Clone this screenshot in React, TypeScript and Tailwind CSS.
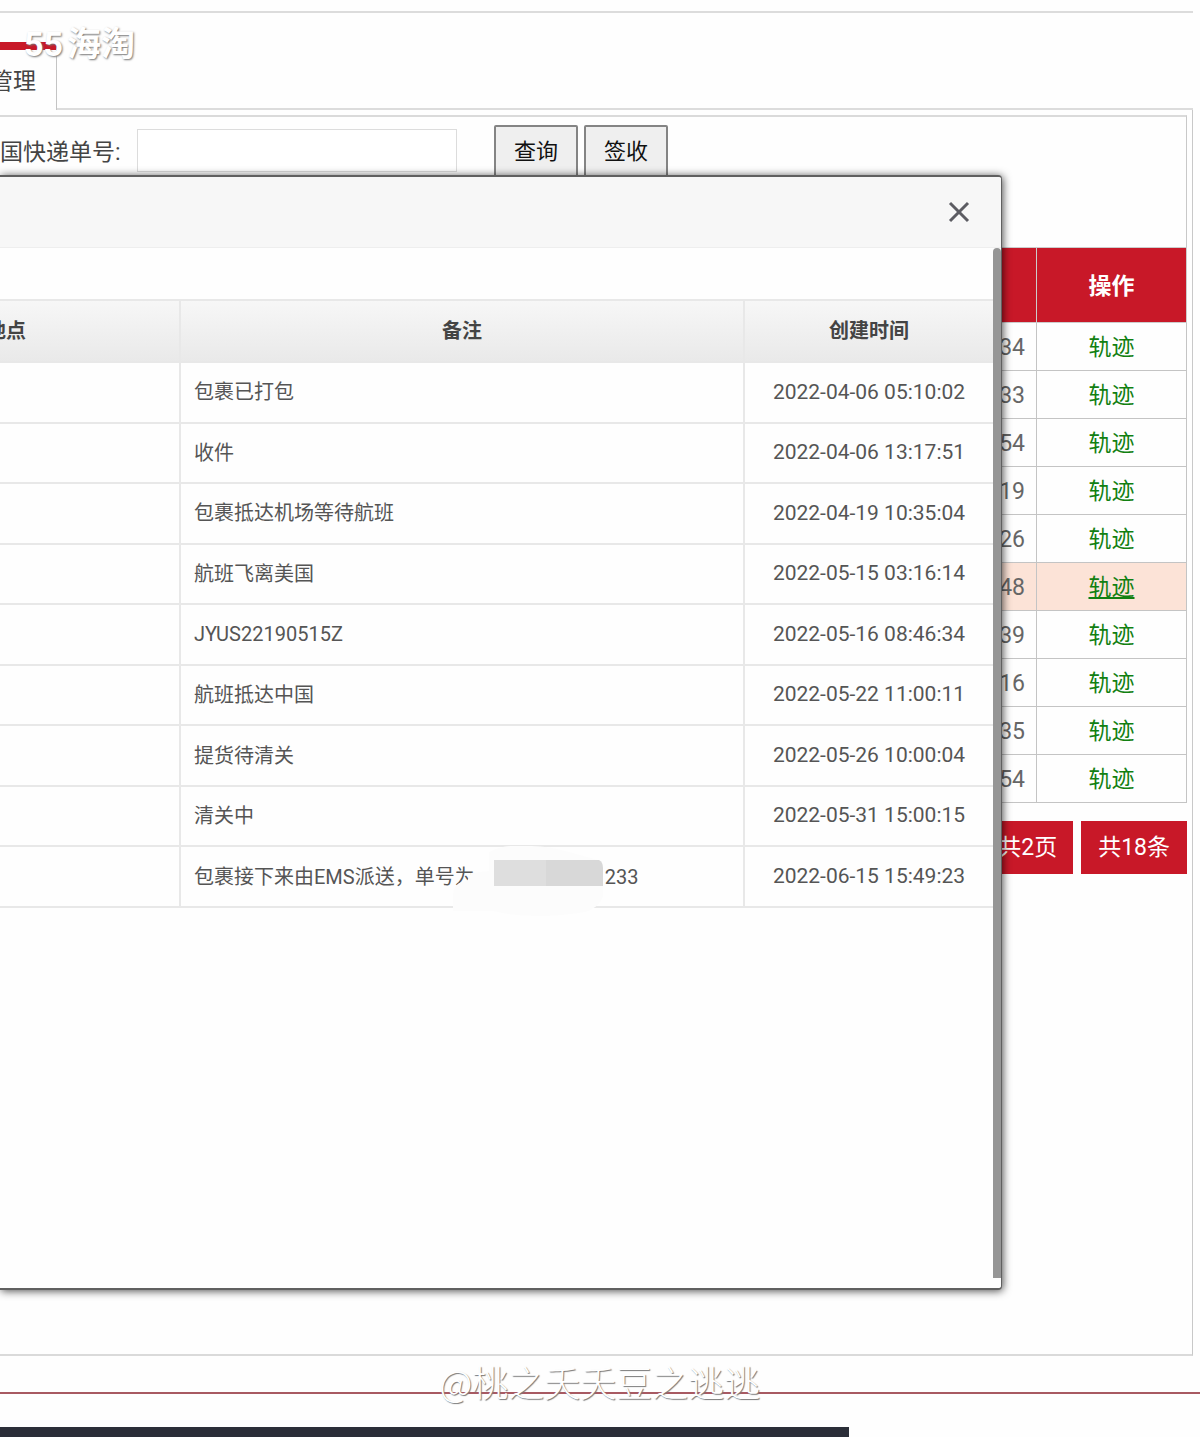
import { X } from "lucide-react";

type Track = {
  remark: string;
  createdAt: string;
  masked?: string;
};

type Parcel = {
  seconds: string;
  active?: boolean;
};

const TRACKS: Track[] = [
  { remark: "包裹已打包", createdAt: "2022-04-06 05:10:02" },
  { remark: "收件", createdAt: "2022-04-06 13:17:51" },
  { remark: "包裹抵达机场等待航班", createdAt: "2022-04-19 10:35:04" },
  { remark: "航班飞离美国", createdAt: "2022-05-15 03:16:14" },
  { remark: "JYUS22190515Z", createdAt: "2022-05-16 08:46:34" },
  { remark: "航班抵达中国", createdAt: "2022-05-22 11:00:11" },
  { remark: "提货待清关", createdAt: "2022-05-26 10:00:04" },
  { remark: "清关中", createdAt: "2022-05-31 15:00:15" },
  {
    remark: "包裹接下来由EMS派送，单号为",
    createdAt: "2022-06-15 15:49:23",
    masked: "233",
  },
];

const PARCELS: Parcel[] = [
  { seconds: "34" },
  { seconds: "33" },
  { seconds: "54" },
  { seconds: "19" },
  { seconds: "26" },
  { seconds: "48", active: true },
  { seconds: "39" },
  { seconds: "16" },
  { seconds: "35" },
  { seconds: "54" },
];

function TabBar() {
  return (
    <nav className="mt-[29px] mr-[7px] flex h-[68px]">
      <a
        href="#parcels"
        className="flex w-[57px] shrink-0 justify-end overflow-hidden border-t-8 border-r border-t-[#c81828] border-r-[#c4c4c4] pt-4 pr-5 text-[23px] leading-8 whitespace-nowrap text-[#444]"
      >
        管理
      </a>
      <div className="flex-1 border-b-2 border-[#dcdcdc]" />
    </nav>
  );
}

function SearchBar() {
  return (
    <form className="flex h-[132px] items-start border-t-2 border-r border-t-[#dadada] border-r-[#c8c8c8] pt-2">
      <label
        htmlFor="express-no"
        className="w-[137px] shrink-0 pt-3 text-[23px] leading-8 text-[#444]"
      >
        国快递单号:
      </label>
      <input
        id="express-no"
        type="text"
        className="mt-1 h-[43px] w-80 border border-[#dcdcdc] bg-white px-2 text-[22px]"
      />
      <div className="ml-[37px] flex gap-[6px]">
        <button
          type="button"
          className="h-[53px] w-[84px] rounded-xs border-2 border-[#848484] bg-[#efefef] text-[22px] text-[#111]"
        >
          查询
        </button>
        <button
          type="button"
          className="h-[53px] w-[84px] rounded-xs border-2 border-[#848484] bg-[#efefef] text-[22px] text-[#111]"
        >
          签收
        </button>
      </div>
    </form>
  );
}

function ParcelTable() {
  return (
    <table className="w-full table-fixed border-collapse text-[23px] leading-8">
      <thead>
        <tr className="h-[75px] bg-[#c81828] text-white">
          <th className="border border-[#ccc]" />
          <th className="w-[150px] border border-[#ccc] pt-[3px] font-bold">操作</th>
        </tr>
      </thead>
      <tbody>
        {PARCELS.map((parcel, index) => (
          <tr
            key={index}
            className={parcel.active ? "h-12 bg-[#fce3d7]" : "h-12"}
          >
            <td className="border border-[#c4c4c4] pt-[3px] pr-[11px] text-right text-[#666]">
              {parcel.seconds}
            </td>
            <td className="border border-[#c4c4c4] pt-[3px] text-center">
              <a
                href="#track"
                className={
                  parcel.active
                    ? "text-[#118011] underline underline-offset-2"
                    : "text-[#118011]"
                }
              >
                轨迹
              </a>
            </td>
          </tr>
        ))}
      </tbody>
    </table>
  );
}

function Pager() {
  return (
    <div className="mt-[18px] flex justify-end gap-2 text-[23px] text-white">
      <span className="flex h-[53px] items-center bg-[#c81828] px-4 pt-[2px]">共2页</span>
      <span className="flex h-[53px] items-center bg-[#c81828] px-[17px] pt-[2px]">共18条</span>
    </div>
  );
}

// Blurred-out part of the tracking number
function Mask() {
  return (
    <svg
      className="absolute -top-[17px] -left-[26px] h-[70px] w-[156px]"
      viewBox="0 0 156 70"
      aria-hidden="true"
    >
      <path
        d="M40 6Q52 0 62 0h20q18 0 38 6l29 8q5 8 5 30v6q-4 12-18 16-24 4-46 4-26 0-46-5H4V50q0-14 14-15l4-8 18-2Z"
        fill="#fcfcfc"
      />
      <path d="M45 14h52v26H45Z" fill="#dedede" />
      <path d="M97 14h53q4 2 4 8v18H97Z" fill="#d8d8d8" />
    </svg>
  );
}

function TrackDialog() {
  return (
    <section
      role="dialog"
      aria-label="轨迹"
      className="absolute top-[175px] right-[198px] left-0 flex h-[1115px] flex-col overflow-hidden rounded-r border-y-2 border-r border-[#606060] bg-[#fefefe] shadow-[1px_1px_8px_rgba(0,0,0,0.7)]"
    >
      <header className="flex h-[71px] shrink-0 items-center justify-end border-b border-[#eee] bg-[#f7f7f7] pr-6">
        <button type="button" aria-label="关闭" className="text-[#5c5c62]">
          <X size={36} strokeWidth={2} strokeLinecap="butt" />
        </button>
      </header>
      <div className="flex flex-1 justify-end">
        <div className="flex min-w-0 flex-1 items-start justify-end overflow-hidden pt-[51px]">
          <table className="h-[609px] w-[1162px] shrink-0 table-fixed border-collapse text-xl">
            <thead>
              <tr className="h-[62px] bg-linear-to-b from-[#f7f7f7] to-[#e9e9e9] text-[#444]">
                <th className="border-2 border-[#e8e8e8] font-bold">地点</th>
                <th className="w-[564px] border-2 border-[#e8e8e8] font-bold">备注</th>
                <th className="w-[249px] border-2 border-r-0 border-[#e8e8e8] font-bold">
                  创建时间
                </th>
              </tr>
            </thead>
            <tbody className="text-[#555]">
              {TRACKS.map((track) => (
                <tr key={track.createdAt} className="h-[60px]">
                  <td className="border-2 border-[#e8e8e8]" />
                  <td className="border-2 border-[#e8e8e8] pl-[13px]">
                    {track.masked ? (
                      <div className="flex">
                        {track.remark}
                        <span className="relative w-[130px]">
                          <Mask />
                        </span>
                        {track.masked}
                      </div>
                    ) : (
                      track.remark
                    )}
                  </td>
                  <td className="border-2 border-r-0 border-[#e8e8e8] text-center text-[21px] whitespace-nowrap">
                    {track.createdAt}
                  </td>
                </tr>
              ))}
            </tbody>
          </table>
        </div>
        <div className="h-[1030px] w-2 rounded-t-sm bg-[#969696]" />
      </div>
    </section>
  );
}

export default function App() {
  return (
    <div className="relative w-full overflow-hidden bg-[#fefefe] font-['Roboto','Noto_Sans_CJK_SC',sans-serif]">
      <div className="mt-[11px] mr-[7px] h-[2px] bg-[#dcdcdc]" />
      <TabBar />
      <main className="mr-[7px] h-[1246px] border-r border-b-2 border-r-[#c8c8c8] border-b-[#dadada] pt-[5px] pr-[5px]">
        <SearchBar />
        <ParcelTable />
        <Pager />
      </main>
      <div className="mt-9 h-[2px] bg-[#a85a62]" />
      <footer className="mt-[33px] h-[10px] w-[849px] bg-[#2b2e38]" />

      <TrackDialog />

      <div className="absolute top-6 left-6 flex gap-1 text-[34px] leading-10 font-bold text-white [text-shadow:1px_1px_2px_#777]">
        <span>55</span>
        <span>海淘</span>
      </div>
      <div className="absolute inset-x-0 bottom-8 text-center font-['Noto_Sans_CJK_SC',sans-serif] text-[36px] leading-[48px] font-light text-white [text-shadow:1px_1px_1px_#777]">
        @桃之夭夭豆之逃逃
      </div>
    </div>
  );
}
